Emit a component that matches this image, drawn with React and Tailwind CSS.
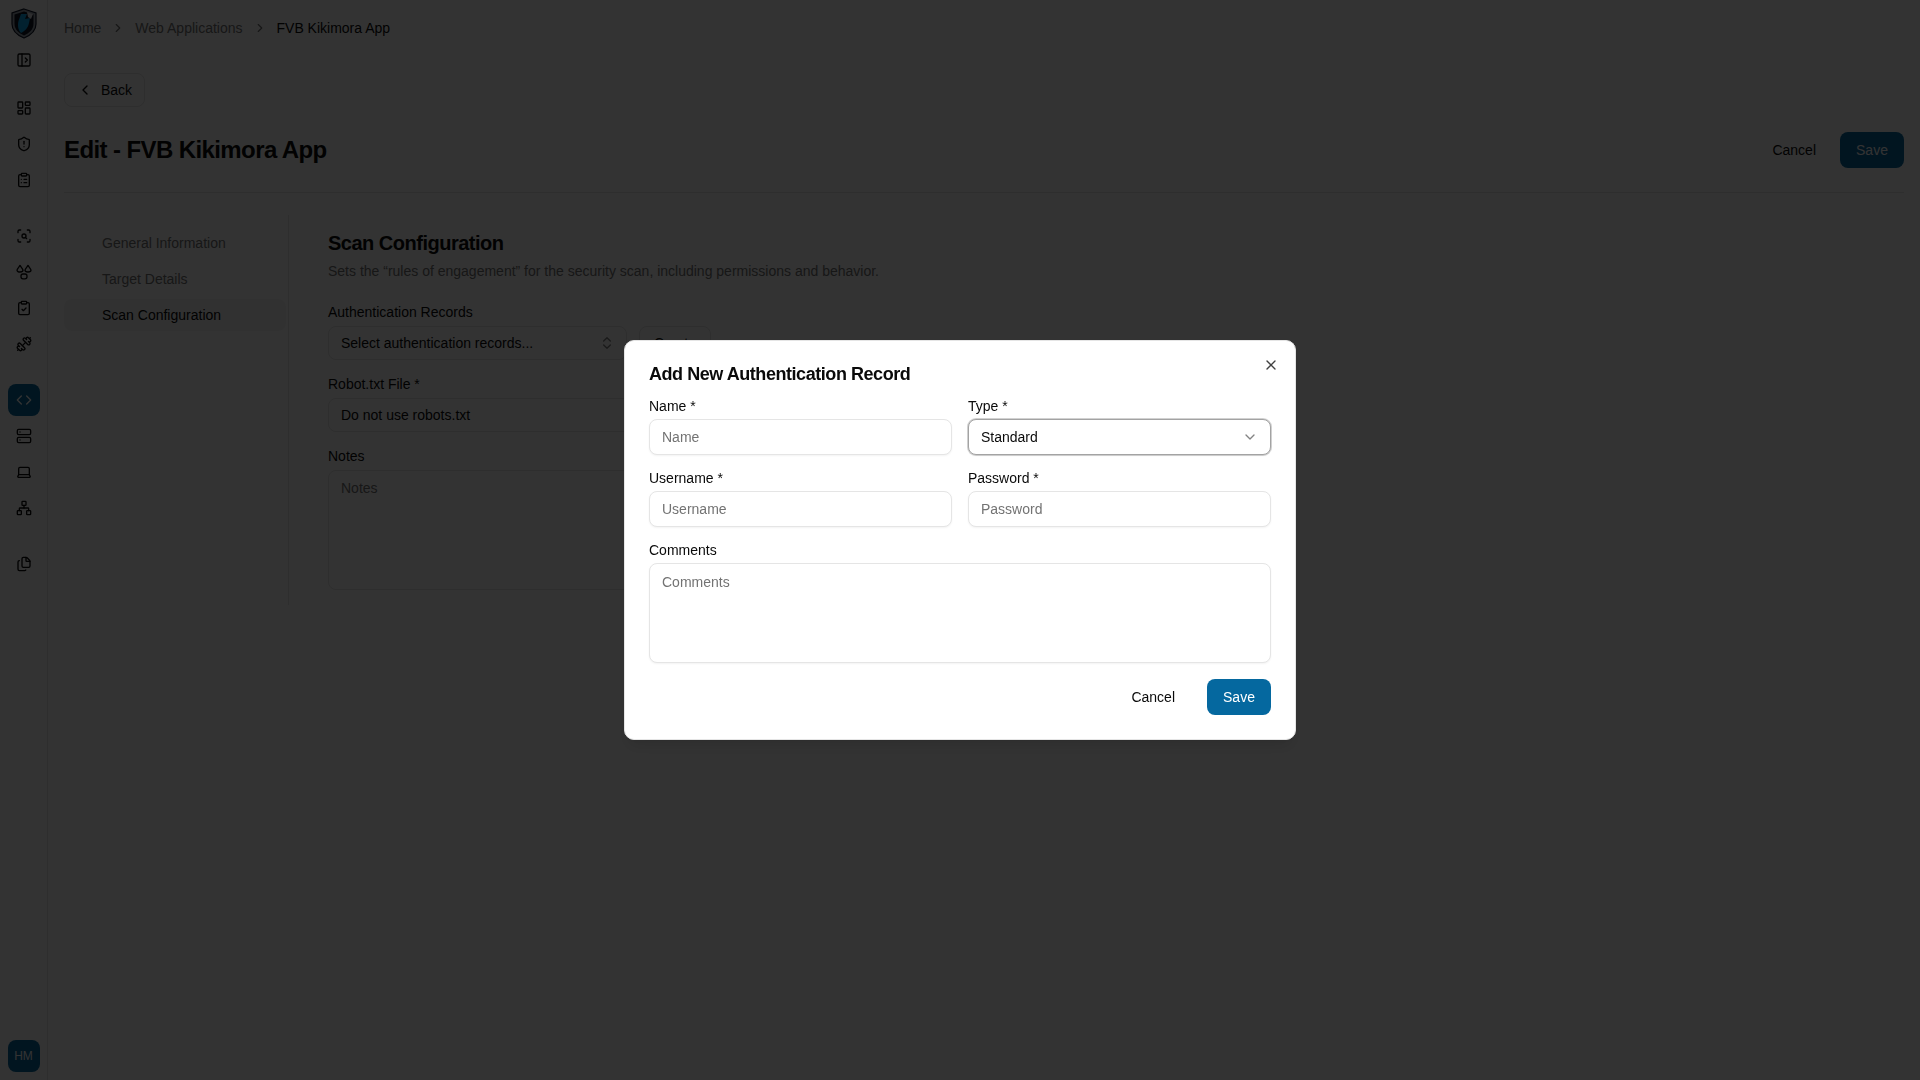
import {
  PanelLeftOpen, LayoutDashboard, ShieldAlert, ClipboardList, ScanSearch, ClipboardCheck,
  Dumbbell, Code, Server, Laptop, Network, Files, ChevronRight, ChevronLeft,
  ChevronsUpDown, ChevronDown, X,
} from "lucide-react";

function Logo() {
  return (
    <svg width="28" height="31" viewBox="0 0 28 31" className="shrink-0">
      <path d="M14 1 L26 5 V16 C26 23 20 27.5 14 30 C8 27.5 2 23 2 16 V5 Z" fill="#9ca3af" stroke="#0f172a" strokeWidth="1.2" />
      <path d="M14 3.5 L23.5 6.5 V16 C23.5 21.5 19 25 14 27.5 C9 25 4.5 21.5 4.5 16 V6.5 Z" fill="#111827" />
      <path d="M11 6 L17 6 L15 11 L20 10 L19 15 C18 20 15 23 11 25 C8 22 7.5 17 8.5 13 Z" fill="#0ea5e9" />
      <path d="M17 4 L23 6 L21 11 L18 9 Z" fill="#e5e7eb" />
    </svg>
  );
}

function TriIcon() {
  return (
    <svg width="16" height="16" viewBox="0 0 16 16" fill="none" stroke="currentColor" strokeWidth="1.3" strokeLinejoin="round">
      <path d="M4 1.5 C5.5 3.5 7 5 7 6.3 C7 7.4 5.6 8 4 8 C2.4 8 1 7.4 1 6.3 C1 5 2.5 3.5 4 1.5 Z" />
      <path d="M12 1.5 C13.5 3.5 15 5 15 6.3 C15 7.4 13.6 8 12 8 C10.4 8 9 7.4 9 6.3 C9 5 10.5 3.5 12 1.5 Z" />
      <rect x="5" y="10" width="6" height="4.8" rx="2" />
    </svg>
  );
}

function RailButton({ icon: Icon, active }) {
  return (
    <div className={`flex h-8 w-8 items-center justify-center rounded-lg ${active ? "bg-[#05689f] text-white" : "text-[#0a0a0a]"}`}>
      <Icon size={16} />
    </div>
  );
}

function Rail() {
  return (
    <aside className="flex h-full w-12 shrink-0 flex-col items-center border-r border-[#e5e5e5] bg-white pb-2">
      <div className="h-11 pt-2">
        <Logo />
      </div>
      <RailButton icon={PanelLeftOpen} />
      <div className="mt-4 flex flex-col gap-1">
        <RailButton icon={LayoutDashboard} />
        <RailButton icon={ShieldAlert} />
        <RailButton icon={ClipboardList} />
      </div>
      <div className="mt-6 flex flex-col gap-1">
        <RailButton icon={ScanSearch} />
        <RailButton icon={TriIcon} />
        <RailButton icon={ClipboardCheck} />
        <RailButton icon={Dumbbell} />
      </div>
      <div className="mt-6 flex flex-col gap-1">
        <RailButton icon={Code} active />
        <RailButton icon={Server} />
        <RailButton icon={Laptop} />
        <RailButton icon={Network} />
      </div>
      <div className="mt-6">
        <RailButton icon={Files} />
      </div>
      <div className="mt-auto flex h-8 w-8 items-center justify-center rounded-lg bg-[#05689f] text-xs text-white">HM</div>
    </aside>
  );
}

function Page() {
  return (
    <div className="flex h-screen w-full bg-white text-[#0a0a0a]">
      <Rail />
      <main className="flex-1 px-4">
        <nav className="flex h-14 items-center gap-2.5 text-sm text-[#737373]">
          <span>Home</span>
          <ChevronRight size={14} />
          <span>Web Applications</span>
          <ChevronRight size={14} />
          <span className="text-[#0a0a0a]">FVB Kikimora App</span>
        </nav>
        <div className="border-b border-[#e5e5e5] pt-[17px] pb-6">
          <button className="flex h-[34px] items-center gap-2 rounded-lg border border-[#e5e5e5] bg-white px-3 text-sm">
            <ChevronLeft size={16} />
            Back
          </button>
          <div className="mt-[25px] flex items-center justify-between">
            <h1 className="text-2xl font-bold tracking-tight">Edit - FVB Kikimora App</h1>
            <div className="flex items-center gap-2">
              <button className="h-9 px-4 text-sm">Cancel</button>
              <button className="h-9 w-16 rounded-lg bg-[#05689f] text-sm text-white">Save</button>
            </div>
          </div>
        </div>
        <div className="mt-[22px] flex">
          <div className="flex h-[390px] w-[225px] shrink-0 flex-col gap-1 border-r border-[#e5e5e5] pt-3 pr-0.5 text-sm text-[#737373]">
            <div className="flex h-8 items-center rounded-lg pl-[38px]">General Information</div>
            <div className="flex h-8 items-center rounded-lg pl-[38px]">Target Details</div>
            <div className="flex h-8 items-center rounded-lg bg-[#f5f5f5] pl-[38px] text-[#0a0a0a]">Scan Configuration</div>
          </div>
          <div className="w-[422px] pl-[39px]">
            <h2 className="pt-[16px] text-xl leading-6 font-bold tracking-tight">Scan Configuration</h2>
            <p className="mt-1.5 text-sm leading-5 whitespace-nowrap text-[#737373]">Sets the “rules of engagement” for the security scan, including permissions and behavior.</p>
            <label className="mt-[24px] block text-sm leading-[14px]">Authentication Records</label>
            <div className="mt-[7px] flex gap-3">
              <div className="flex h-[34px] flex-1 items-center justify-between rounded-lg border border-[#e5e5e5] pr-[11px] pl-3 text-sm">
                Select authentication records...
                <ChevronsUpDown size={16} className="opacity-50" />
              </div>
              <button className="h-[34px] w-[72px] rounded-lg border border-[#e5e5e5] text-sm">Create</button>
            </div>
            <label className="mt-[17px] block text-sm leading-[14px]">Robot.txt File *</label>
            <div className="mt-[7px] flex h-[34px] items-center rounded-lg border border-[#e5e5e5] px-3 text-sm">Do not use robots.txt</div>
            <label className="mt-[17px] block text-sm leading-[14px]">Notes</label>
            <div className="mt-[7px] h-[120px] rounded-lg border border-[#e5e5e5] px-3 py-[7px] text-sm text-[#737373]">Notes</div>
          </div>
        </div>
      </main>
    </div>
  );
}

function Field({ label, placeholder }) {
  return (
    <div>
      <label className="block text-sm leading-[14px]">{label}</label>
      <input
        placeholder={placeholder}
        className="mt-1.5 h-9 w-full rounded-lg border border-[#e5e5e5] bg-white px-3 text-sm shadow-xs outline-none placeholder:text-[#737373]"
      />
    </div>
  );
}

function Modal() {
  return (
    <div className="fixed inset-0 flex items-center justify-center bg-black/80">
      <div className="relative h-[400px] w-[672px] rounded-[10px] border border-[#e5e5e5] bg-white p-6 shadow-lg">
        <X size={16} className="absolute top-[16px] right-[16px] text-[#404040]" />
        <h2 className="text-lg leading-[18px] font-bold tracking-tight text-[#0a0a0a]">Add New Authentication Record</h2>
        <div className="mt-4 grid grid-cols-2 gap-x-4 gap-y-4 text-[#0a0a0a]">
          <Field label="Name *" placeholder="Name" />
          <div>
            <label className="block text-sm leading-[14px]">Type *</label>
            <div className="mt-1.5 flex h-9 items-center justify-between rounded-lg border border-[#a3a3a3] bg-white px-3 text-sm shadow-xs ring-1 ring-[#a3a3a3]/50">
              Standard
              <ChevronDown size={16} className="opacity-50" />
            </div>
          </div>
          <Field label="Username *" placeholder="Username" />
          <Field label="Password *" placeholder="Password" />
          <div className="col-span-2">
            <label className="block text-sm leading-[14px]">Comments</label>
            <textarea
              placeholder="Comments"
              className="mt-1.5 block h-[100px] w-full resize-none rounded-lg border border-[#e5e5e5] bg-white px-3 py-2 text-sm shadow-xs outline-none placeholder:text-[#737373]"
            />
          </div>
        </div>
        <div className="mt-4 flex items-center justify-end gap-4 text-sm">
          <button className="h-9 px-4 text-[#0a0a0a]">Cancel</button>
          <button className="h-9 w-16 rounded-lg bg-[#05689f] text-white">Save</button>
        </div>
      </div>
    </div>
  );
}

export default function App() {
  return (
    <div className="relative h-screen w-full overflow-hidden font-['Liberation_Sans',Arial,sans-serif]">
      <Page />
      <Modal />
    </div>
  );
}
